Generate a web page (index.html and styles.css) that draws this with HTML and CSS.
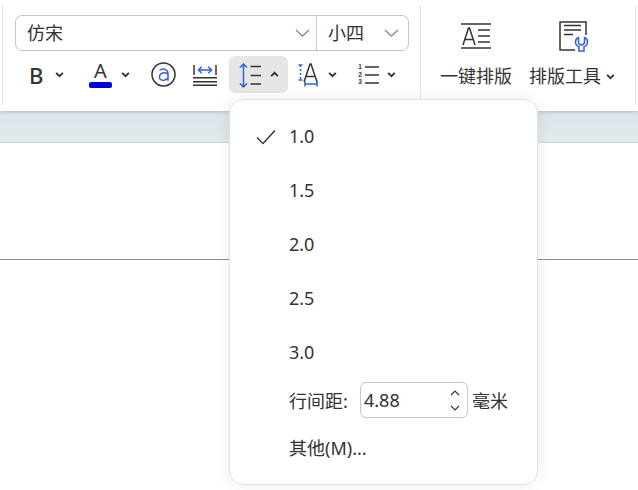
FILE: index.html
```html
<!DOCTYPE html>
<html lang="zh">
<head>
<meta charset="utf-8">
<title>行间距</title>
<link rel="stylesheet" href="styles.css">
</head>
<body>
<div class="app">
  <header class="ribbon">
    <section class="group group-font">
      <div class="combo">
        <div class="combo-field combo-name"><span>仿宋</span>
          <svg class="combo-arrow" viewBox="0 0 15 8"><path d="M1 1 7.500 7 14 1"/></svg></div>
        <div class="combo-field combo-size"><span>小四</span>
          <svg class="combo-arrow" viewBox="0 0 15 8"><path d="M1 1 7.500 7 14 1"/></svg></div>
      </div>
      <div class="tools">
        <button class="tool tool-bold"><span class="bold-b">B</span>
          <svg class="caret" viewBox="0 0 8 6"><path d="M1 1.500 4 4.500l3-3"/></svg></button>
        <button class="tool tool-color"><span class="color-wrap"><span class="color-a">A</span><span class="color-bar"></span></span>
          <svg class="caret" viewBox="0 0 8 6"><path d="M1 1.500 4 4.500l3-3"/></svg></button>
        <button class="tool tool-icon">
          <svg class="icon24" viewBox="0 0 25 25"><circle cx="12.500" cy="12.500" r="11.500" class="dark"/><path class="blue" d="M8.500 8.300C10 7 13 6.800 15 7.800c1.500.8 2 2 2 3.500V18.800M17 12c-2-1.300-4.500-1.400-6.500-.5-2.500 1.100-2.800 5-.8 6.200 2.300 1.300 5.500.5 7.300-2"/></svg>
        </button>
        <button class="tool tool-justify">
          <svg class="icon-just" viewBox="0 0 24 26"><path class="dark" d="M1 3v10M23 3v10M0 15.700h24M0 19.700h24M0 23.300h24"/><path class="blue" d="M5.500 8h13M8.700 4.800 5.500 8l3.200 3.200M15.300 4.800 18.500 8l-3.200 3.200"/></svg>
        </button>
        <button class="tool tool-active">
          <svg class="icon-spacing" viewBox="0 0 23 26"><path class="blue" d="M4.500 2v23M1 5.500 4.500 2 8 5.500M1 21.500 4.500 25 8 21.500"/><path class="dark" d="M11.500 4.500H22M11.500 13.500H22M11.500 22H22"/></svg>
          <svg class="caret" viewBox="0 0 8 6"><path d="M1 4.500 4 1.500l3 3"/></svg>
        </button>
        <button class="tool tool-char">
          <svg class="icon-char" viewBox="0 0 20 24"><path class="blue dashed" d="M2.500 2v15"/><path class="blue" d="M.5 2h4M.5 17h4M7 21h12M7 18.500v5M19 18.500v5"/><path class="dark" d="M6 19 12 1h1l6 18M8 13.500h9"/></svg>
          <svg class="caret" viewBox="0 0 8 6"><path d="M1 1.500 4 4.500l3-3"/></svg>
        </button>
        <button class="tool tool-list">
          <span class="list-nums"><span>1</span><span>2</span><span>3</span></span>
          <svg class="icon-list" viewBox="0 0 14 20"><path class="dark" d="M0 2h14M0 10h14M0 18h14"/></svg>
          <svg class="caret" viewBox="0 0 8 6"><path d="M1 1.500 4 4.500l3-3"/></svg>
        </button>
      </div>
    </section>
    <section class="group group-layout">
      <button class="big">
        <svg class="big-icon" viewBox="0 0 32 32"><path class="dark" d="M1 4h30M1 28h30M3 25 8.500 8h1L15 25M5 19.500h9M18 10h12M18 16h12M18 22h12"/></svg>
        <span class="big-label">一键排版</span>
      </button>
      <button class="big">
        <svg class="big-icon big-icon-tools" viewBox="0 0 32 32"><path class="dark" d="M28 15V2H2v28h15M6 5.500h17M6 10h17M6 14.500h9"/><path class="blue" d="M20.500 17.500c-2 .8-3 2.500-3 4.500 0 2.300 1.500 4 3.500 4.800V31h5v-4.200c2-.8 3.500-2.500 3.500-4.800 0-2-1-3.700-3-4.500v4.500a3 3 0 0 1-6 0z"/></svg>
        <span class="big-label">排版工具<svg class="caret caret-big" viewBox="0 0 8 6"><path d="M1 1.500 4 4.500l3-3"/></svg></span>
      </button>
    </section>
    <div class="group group-rest"></div>
  </header>
  <main class="doc">
    <div class="doc-band"></div>
    <div class="doc-page"><hr class="doc-rule"></div>
  </main>
  <div class="popup">
    <div class="opt"><svg class="check" viewBox="0 0 20 16"><path d="M1 8.500 7 14.500 19 1.500"/></svg><span>1.0</span></div>
    <div class="opt"><span>1.5</span></div>
    <div class="opt"><span>2.0</span></div>
    <div class="opt"><span>2.5</span></div>
    <div class="opt"><span>3.0</span></div>
    <div class="spacing-row">
      <span class="spacing-label">行间距:</span>
      <div class="spin"><span class="spin-value">4.88</span>
        <span class="spin-arrows">
          <svg viewBox="0 0 10 6"><path d="M1 5 5 1l4 4"/></svg>
          <svg viewBox="0 0 10 6"><path d="M1 1l4 4 4-4"/></svg>
        </span>
      </div>
      <span class="spacing-unit">毫米</span>
    </div>
    <div class="other">其他(M)...</div>
  </div>
</div>
</body>
</html>
```
FILE: styles.css
```css
* { box-sizing: border-box; }
html, body { margin: 0; padding: 0; }
body {
  width: 638px;
  height: 490px;
  overflow: hidden;
  background: #fff;
  color: #333;
  font-family: "Noto Sans", "Noto Sans CJK SC", sans-serif;
}
button {
  border: 0;
  background: none;
  padding: 0;
  margin: 0;
  font: inherit;
  color: inherit;
  display: flex;
  align-items: center;
  text-align: left;
}
svg { display: block; fill: none; flex: none; }
.dark { stroke: #333; stroke-width: 1.500; fill: none; }
.blue { stroke: #2f62e0; stroke-width: 1.500; fill: none; }
.dashed { stroke-dasharray: 2 2; }

.app { position: relative; width: 638px; height: 490px; }

.ribbon {
  display: flex;
  height: 111px;
  padding: 5px 0 6px 2px;
  background: #fff;
  position: relative;
  box-shadow: 0 1px 3px rgba(0,0,0,.18);
}
.group { border-left: 1px solid #e3e3e3; height: 100px; }
.group-font { width: 418px; padding: 10px 0 0 12px; }
.group-layout { width: 215px; display: flex; padding: 15px 0 0 19px; gap: 17px; }
.group-rest { flex: 1; }

.combo {
  display: flex;
  width: 394px;
  height: 36px;
  border: 1px solid #c6c6c6;
  border-radius: 7px;
  font-size: 18px;
}
.combo-field {
  display: flex;
  align-items: center;
  justify-content: space-between;
}
.combo-field span { margin-bottom: 3px; }
.combo-name { width: 301px; padding: 0 6px 0 11px; border-right: 1px solid #c6c6c6; }
.combo-size { flex: 1; padding: 0 9px 0 11px; }
.combo-arrow { width: 15px; height: 8px; }
.combo-arrow path { stroke: #8b8b8b; stroke-width: 1.300; }

.tools { display: flex; align-items: center; height: 37px; margin-top: 5px; }
.caret { width: 9px; height: 7px; }
.caret path { stroke: #333; stroke-width: 1.700; }

.tool { height: 37px; flex: none; }
.tool-bold { width: 67px; padding-left: 14px; }
.bold-b { font-size: 22px; font-weight: 500; width: 26px; line-height: 1; }
.tool-color { width: 61px; padding-left: 7px; gap: 9px; }
.color-wrap { display: flex; flex-direction: column; align-items: center; width: 23px; }
.color-a { font-size: 20px; line-height: 20px; height: 20px; }
.color-bar { width: 23px; height: 6px; margin-top: 1px; background: #0000d8; border-radius: 2px; }
.tool-icon { width: 42px; padding-left: 8px; }
.icon24 { width: 25px; height: 25px; }
.tool-justify { width: 44px; padding-left: 8px; }
.icon-just { width: 24px; height: 26px; }
.tool-active {
  width: 59px;
  padding-left: 10px;
  gap: 8px;
  background: #e6e6e6;
  border-radius: 6px;
}
.icon-spacing { width: 23px; height: 26px; }
.tool-char { width: 59px; padding-left: 10px; gap: 10px; }
.icon-char { width: 20px; height: 24px; }
.tool-list { width: 59px; padding-left: 10px; }
.list-nums {
  display: flex;
  flex-direction: column;
  font-family: "Liberation Sans", sans-serif;
  font-size: 6.500px;
  font-weight: 700;
  line-height: 7.500px;
  width: 6px;
  flex: none;
  align-items: center;
}
.icon-list { width: 14px; height: 20px; margin: 0 8px 0 2px; }

.big { flex-direction: column; }
.big-icon { width: 32px; height: 32px; }
.big-icon-tools { margin-left: 4px; }
.big-label {
  display: flex;
  align-items: center;
  font-size: 18px;
  line-height: 24px;
  margin-top: 12px;
  gap: 5px;
  white-space: nowrap;
}

.doc { height: 379px; }
.doc-band { height: 32px; background: linear-gradient(#dbe3e9, #e3eaee); border-bottom: 1px solid #cfd3d6; }
.doc-page { padding-top: 116px; }
.doc-rule { margin: 0; border: 0; border-top: 1px solid #8a8a8a; }

.popup {
  position: absolute;
  left: 229px;
  top: 99px;
  width: 309px;
  height: 386px;
  padding: 9px 0 0 59px;
  background: #fff;
  border: 1px solid #e2e2e2;
  border-radius: 14px;
  box-shadow: 0 0 16px rgba(0,0,0,.08);
  font-size: 18px;
  color: #333;
}
.opt { display: flex; align-items: center; height: 54px; position: relative; }
.check { position: absolute; left: -33px; top: 20px; width: 20px; height: 16px; }
.check path { stroke: #333; stroke-width: 1.400; }
.spacing-row { display: flex; align-items: center; height: 42px; }
.spacing-label { width: 71px; }
.spin {
  display: flex;
  align-items: center;
  justify-content: space-between;
  width: 108px;
  height: 36px;
  padding: 0 7px 0 3px;
  border: 1px solid #c6c6c6;
  border-radius: 6px;
}
.spin-arrows { display: flex; flex-direction: column; gap: 9px; }
.spin-arrows svg { width: 10px; height: 6px; }
.spin-arrows path { stroke: #333; stroke-width: 1.200; }
.spacing-unit { margin-left: 4px; }
.other { margin-top: 9px; line-height: 36px; }
```
